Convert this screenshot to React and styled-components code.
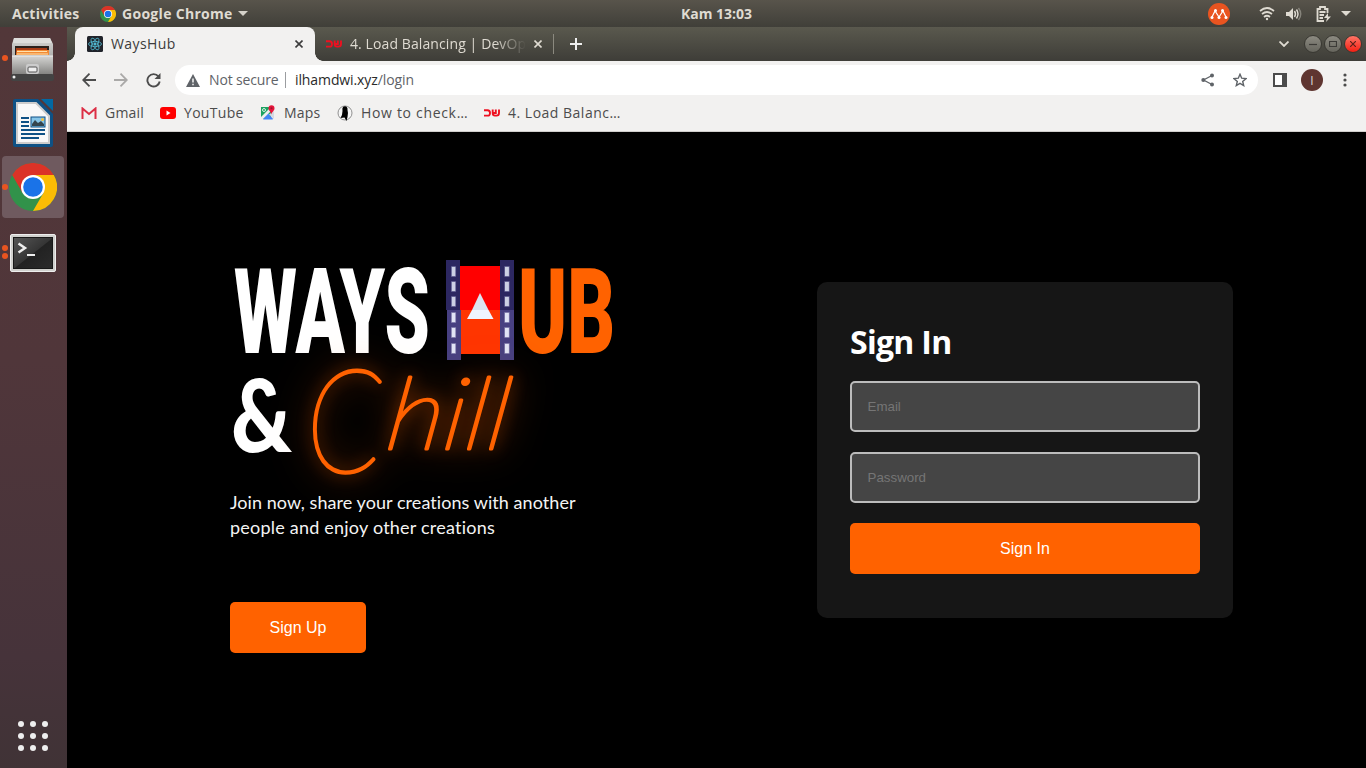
import React from "react";
import styled, { createGlobalStyle } from "styled-components";

const Global = createGlobalStyle`
  * { box-sizing: border-box; }
  body { margin: 0; background: #000; overflow: hidden; }
  button, input { margin: 0; }
  svg { display: block; flex: none; }
`;

const ui = `"Open Sans", "Noto Sans", sans-serif`;

const Desktop = styled.div`
  width: 1366px;
  height: 768px;
  display: flex;
  flex-direction: column;
  font-family: ${ui};
  overflow: hidden;
`;

/* system bar */
const TopBar = styled.header`
  height: 27px;
  flex: none;
  display: grid;
  grid-template-columns: 1fr auto 1fr;
  align-items: center;
  background: linear-gradient(#58544b, #403f39);
  color: #dfdbd2;
  font-size: 14px;
  font-weight: 700;
`;
const TopGroup = styled.div`
  display: flex;
  align-items: center;
  height: 27px;
  justify-content: ${(p) => (p.$end ? "flex-end" : "flex-start")};
  padding: ${(p) => (p.$end ? "0 15px 0 0" : "0 0 0 12px")};
`;
const Label = styled.span`
  display: block;
  white-space: nowrap;
  line-height: 20px;
  letter-spacing: ${(p) => p.$ls || 0}px;
  margin-left: ${(p) => p.$ml || 0}px;
  width: ${(p) => (p.$w ? `${p.$w}px` : "auto")};
`;
const Icon = styled.svg`
  margin-left: ${(p) => p.$ml || 0}px;
  margin-top: ${(p) => p.$mt || 0}px;
`;

const Body = styled.div`
  flex: 1;
  display: flex;
  min-height: 0;
`;

/* dock */
const Dock = styled.nav`
  width: 67px;
  flex: none;
  display: flex;
  flex-direction: column;
  gap: 3px;
  background: linear-gradient(#523739 0%, #50363a 45%, #46333a 85%, #403336 100%);
`;
const DockItem = styled.div`
  height: ${(p) => p.$h || 62}px;
  width: 62px;
  margin-left: 2px;
  border-radius: 4px;
  background: ${(p) => (p.$active ? "#6f5a5f" : "transparent")};
  display: flex;
  align-items: center;
`;
const Dots = styled.div`
  width: 6px;
  display: flex;
  flex-direction: column;
  gap: 2px;
`;
const Dot = styled.i`
  width: 6px;
  height: 6px;
  border-radius: 50%;
  background: #e95420;
`;
const DockIcon = styled.div`
  flex: 1;
  display: flex;
  justify-content: center;
  padding: ${(p) => p.$pt || 0}px 6px 0 0;
`;
const AppsGrid = styled.div`
  margin: auto 0 17px 18px;
  display: grid;
  grid-template-columns: repeat(3, 6px);
  gap: 6px;
`;
const AppDot = styled.i`
  width: 6px;
  height: 6px;
  border-radius: 50%;
  background: #eee;
`;

/* browser */
const Browser = styled.main`
  flex: 1;
  display: flex;
  flex-direction: column;
  min-width: 0;
`;
const TabStrip = styled.div`
  height: 34px;
  flex: none;
  display: flex;
  align-items: center;
  background: linear-gradient(#5a594e, #3e3d38);
  color: #dfdbd2;
  font-size: 14px;
`;
const Tab = styled.div`
  position: relative;
  width: 240px;
  height: 34px;
  margin-left: 8px;
  padding: 0 12px;
  display: flex;
  align-items: center;
  background: #f2f1f0;
  color: #3c3c3c;
  border-radius: 8px 8px 0 0;
  &::before, &::after {
    content: "";
    position: absolute;
    bottom: 0;
    width: 8px;
    height: 8px;
  }
  &::before { left: -8px; background: radial-gradient(circle at 0 0, transparent 7.5px, #f2f1f0 8px); }
  &::after { right: -8px; background: radial-gradient(circle at 100% 0, transparent 7.5px, #f2f1f0 8px); }
`;
const FadeTitle = styled(Label)`
  overflow: hidden;
  mask-image: linear-gradient(90deg, #000 82%, transparent 100%);
`;
const Divider = styled.i`
  width: 1px;
  height: ${(p) => p.$h}px;
  margin-left: ${(p) => p.$ml}px;
  background: ${(p) => p.$c};
`;
const WindowButtons = styled.div`
  margin-left: auto;
  display: flex;
  align-items: center;
  padding-right: 4px;
`;
const WinGroup = styled.div`
  display: flex;
  gap: 2px;
  margin-left: 15px;
`;
const WinBtn = styled.div`
  width: 18px;
  height: 18px;
  border-radius: 50%;
  border: 1px solid #393832;
  background: ${(p) => (p.$close ? "linear-gradient(#ff7566, #f31f13)" : "linear-gradient(#8c8a81, #66655d)")};
  display: grid;
  place-items: center;
`;
const Toolbar = styled.div`
  height: 38px;
  flex: none;
  display: flex;
  align-items: center;
  background: #f2f1f0;
`;
const Address = styled.div`
  width: 1083px;
  height: 30px;
  margin-left: 14px;
  padding: 0 11px 0 10px;
  border-radius: 15px;
  background: #fff;
  color: #5f6368;
  font-size: 14px;
  display: flex;
  align-items: center;
`;
const Host = styled.b`
  font-weight: 400;
  color: #2a2a2a;
`;
const AddressEnd = styled.div`
  margin-left: auto;
  display: flex;
`;
const Avatar = styled.div`
  width: 22px;
  height: 22px;
  margin-left: 14px;
  border-radius: 50%;
  background: #5f3530;
  color: #ddd;
  font-size: 12px;
  display: grid;
  place-items: center;
`;
const Bookmarks = styled.div`
  height: 33px;
  flex: none;
  display: flex;
  align-items: center;
  padding: 0 0 4px 14px;
  background: #f2f1f0;
  border-bottom: 1px solid #d0cecc;
  color: #4c4c4c;
  font-size: 14px;
`;

/* page */
const Page = styled.section`
  flex: 1;
  background: #000;
  display: flex;
  align-items: flex-start;
`;
const Hero = styled.div`
  width: 587px;
  margin-left: 163px;
  padding-top: 118px;
`;
const Tagline = styled.p`
  margin: 0;
  padding-bottom: 1px;
  font-family: Lato, sans-serif;
  font-size: 18px;
  line-height: 25px;
  color: #f4f4f4;
  font-weight: 400;
`;
const Line = styled.span`
  display: block;
  white-space: nowrap;
  letter-spacing: ${(p) => p.$ls}px;
`;
const Button = styled.button`
  width: ${(p) => p.$w};
  height: 51px;
  margin-top: ${(p) => p.$mt}px;
  padding: 0;
  border: 0;
  border-radius: 5px;
  background: #ff6200;
  color: #fff;
  font: 16px "Liberation Sans", sans-serif;
  display: block;
`;
const Card = styled.form`
  width: 416px;
  height: 336px;
  margin-top: 150px;
  padding: 38px 33px 0;
  border-radius: 10px;
  background: #161616;
`;
const Title = styled.h1`
  margin: 0 0 17px;
  color: #fff;
  font: 700 32px/44px ${ui};
  letter-spacing: ${(p) => p.$ls}px;
`;
const Field = styled.input`
  display: block;
  width: 350px;
  height: 51px;
  margin-bottom: 20px;
  padding: 0 15.5px;
  border: 2px solid #bcbcbc;
  border-radius: 5px;
  background: #454545;
  font: 13.333px "Liberation Sans", sans-serif;
  &::placeholder { color: #757575; opacity: 1; }
`;

const Chrome = ({ size, ...rest }) => (
  <Icon width={size} height={size} viewBox="0 0 48 48" {...rest}>
    <circle cx="24" cy="24" r="24" fill="#31924a" />
    <path d="M3.2 12A24 24 0 0 1 44.800 12H24L13.600 30Z" fill="#db3327" />
    <path d="M24 12H44.8A24 24 0 0 1 24 48L34.4 30Z" fill="#fbbc05" />
    <circle cx="24" cy="24" r="12" fill="#fff" />
    <circle cx="24" cy="24" r="9.8" fill="#1a73e8" />
  </Icon>
);

const Files = () => (
  <svg width="44" height="44" viewBox="0 0 44 44">
    <defs>
      <linearGradient id="cab" x2="0" y2="1"><stop stopColor="#d5d5d3" /><stop offset="1" stopColor="#858583" /></linearGradient>
    </defs>
    <path d="M3 1H39L42 7V40H1V7Z" fill="url(#cab)" />
    <path d="M3 1H39L41 6H2Z" fill="#dededc" />
    <path d="M4 9H38V18H4Z" fill="#2b211d" />
    <path d="M5 11H36V18H5Z" fill="#a93c16" />
    <path d="M6 13H38V18H5Z" fill="#f28b35" />
    <path d="M6 14.5H36M6 17H37" stroke="#ffe1ac" />
    <path d="M1 19H42V37H1Z" fill="url(#cab)" />
    <path d="M1 19H42" stroke="#eee" />
    <rect x="15" y="27" width="13" height="10" rx="2" fill="#ccc" />
    <rect x="17" y="30" width="9" height="5" rx="1" fill="#eee" stroke="#555" />
    <rect y="37" width="43" height="7" rx="2" fill="#434343" />
    <circle cx="3" cy="40" r="1.5" fill="#eee" />
  </svg>
);

const Writer = () => (
  <svg width="40" height="48" viewBox="0 0 40 48">
    <path d="M2 0H25L40 15V46Q40 48 38 48H2Q0 48 0 46V2Q0 0 2 0Z" fill="#0e5185" />
    <path d="M28 0H40V12Z" fill="#0369a3" />
    <path d="M4 4H23L36 17V44H4Z" fill="#f8f8f8" stroke="#ccc" strokeWidth="2" />
    <path d="M8 19H16M8 23H16M8 27H16M8 31H32M8 35H32M8 39H26" stroke="#0e5185" strokeWidth="2" />
    <rect x="18" y="18" width="14" height="10" fill="#86c5e8" stroke="#0e5185" />
    <path d="M19 27V25L22 21 25 24 28 22 31 25V27Z" fill="#34454e" />
    <circle cx="29.5" cy="20.5" r="1.5" fill="#f4bf3a" />
  </svg>
);

const Terminal = () => (
  <svg width="46" height="38" viewBox="0 0 46 38">
    <defs><linearGradient id="term" x2="1" y2="1"><stop stopColor="#555" /><stop offset=".5" stopColor="#353535" /><stop offset=".52" stopColor="#222" /><stop offset="1" stopColor="#2b2b2b" /></linearGradient></defs>
    <rect x=".5" y=".5" width="45" height="37" rx="1.5" fill="#d0d0cd" stroke="#eee" />
    <rect x="3" y="3" width="40" height="32" fill="#181818" />
    <rect x="4" y="4" width="38" height="30" fill="url(#term)" />
    <path d="M8.500 9.500 15 14 8.500 18.500" fill="none" stroke="#eee" strokeWidth="2.500" />
    <path d="M17 21H25" stroke="#eee" strokeWidth="2" />
  </svg>
);

/* red two-part course mark shared by the second tab and its bookmark */
const CourseMark = ({ ml }) => (
  <Icon $ml={ml} width="16" height="8" viewBox="0 0 16 8" fill="none" stroke="#ee1020" strokeWidth="1.900">
    <path d="M0 1.200H3.500Q6 1.200 6 4T3.500 6.600H0" />
    <path d="M8.700 .5V4Q8.700 6.600 11 6.600H12.500Q15 6.600 15 4V.5M11.800 .5V4H9" />
  </Icon>
);

const Cross = ({ ml, color }) => (
  <Icon $ml={ml} width="8" height="8" viewBox="0 0 8 8" stroke={color} strokeWidth="1.600"><path d="M.5 .5 7.500 7.500M7.500 .5 .5 7.500" /></Icon>
);

const ReactMark = () => (
  <svg width="16" height="16" viewBox="0 0 16 16" fill="none" stroke="#52bad2" strokeWidth=".8">
    <rect width="16" height="16" rx="1.500" fill="#20232a" stroke="none" />
    <ellipse cx="8" cy="8" rx="6.500" ry="2.600" />
    <ellipse cx="8" cy="8" rx="6.500" ry="2.600" transform="rotate(60 8 8)" />
    <ellipse cx="8" cy="8" rx="6.500" ry="2.600" transform="rotate(120 8 8)" />
    <circle cx="8" cy="8" r="1.200" fill="#52bad2" />
  </svg>
);

const notches = [6, 21, 36, 52, 67, 83];

const Wordmark = styled.svg`
  overflow: visible;
  .caps { font: 900 118px Roboto, sans-serif; }
  .amp { font: 900 101px Lato, sans-serif; }
  .script {
    font-family: Lato, sans-serif;
    font-style: italic;
    font-weight: 100;
    fill: #ff6200;
    stroke: #ff6200;
    stroke-width: 3px;
    stroke-linejoin: round;
    filter: drop-shadow(0 0 8px #ff620070) drop-shadow(0 0 18px #ff620080);
  }
`;

const HeroArt = () => (
  <Wordmark width="390" height="240" viewBox="230 250 390 240">
    <text className="caps" x="234" y="353" fill="#fff" textLength="196" lengthAdjust="spacingAndGlyphs">WAYS</text>
    <text className="caps" x="518" y="353" fill="#ff6200" textLength="97" lengthAdjust="spacingAndGlyphs">UB</text>
    <path d="M460 266H501V310H460Z" fill="#f00" />
    <path d="M460 310H501V354H460Z" fill="#ff3500" />
    <path d="M446 260H460V310H446ZM500 260H514V310H500Z" fill="#2c2761" />
    <path d="M447 310H461V360H447ZM500 310H514V360H500Z" fill="#474081" />
    {notches.map((n, i) => (
      <g key={n} fill={i < 3 ? "#ccd0e4" : "#e1e4f5"} stroke={i < 3 ? "#56528a" : "#7772a5"} strokeWidth=".6">
        <rect x="451.300" y={260.500 + n} width="4.500" height="10" />
        <rect x="504.700" y={260.500 + n} width="4.500" height="10" />
      </g>
    ))}
    <path d="M480 293 488.500 310H472Z" fill="#dce2f1" />
    <path d="M472 310H488.500L493.500 319H467Z" fill="#eff5ff" />
    <text className="amp" x="231" y="452" fill="#fff" textLength="61" lengthAdjust="spacingAndGlyphs">&amp;</text>
    <g className="script">
      <text x="306" y="473" fontSize="144" textLength="76" lengthAdjust="spacingAndGlyphs">C</text>
      <text transform="translate(384 449) skewX(-8)" fontSize="100" textLength="122" lengthAdjust="spacingAndGlyphs">hill</text>
    </g>
  </Wordmark>
);

export default function App() {
  return (
    <Desktop>
      <Global />
      <TopBar>
        <TopGroup>
          <Label $w={68} $ls={0.25}>Activities</Label>
          <Chrome size="16" $ml={20} />
          <Label $ml={6} $w={111} $ls={0.3}>Google Chrome</Label>
          <Icon $ml={5} width="10" height="5" viewBox="0 0 10 5" fill="#d5d2ca"><path d="M0 0H10L5 5Z" /></Icon>
        </TopGroup>
        <Label $ls={0} $ml={67}>Kam 13:03</Label>
        <TopGroup $end>
          <svg width="22" height="22" viewBox="0 0 22 22">
            <circle cx="11" cy="11" r="11" fill="#e95420" />
            <path d="M4 14 7 8 11 14 15 8 18 14" fill="none" stroke="#fff" strokeWidth="1.200" />
            <g fill="#fff"><circle cx="4" cy="14.500" r="1.500" /><circle cx="7.500" cy="7.500" r="1.500" /><circle cx="11" cy="14.500" r="1.500" /><circle cx="14.500" cy="7.500" r="1.500" /><circle cx="18" cy="14.500" r="1.500" /></g>
          </svg>
          <Icon $ml={29} width="16" height="14" viewBox="0 0 16 14" fill="none" stroke="#dfdbd2" strokeWidth="1.700">
            <path d="M1 4Q8-2 15 4" /><path d="M3 7Q8 3 13 7" /><path d="M5 10Q8 7.500 11 10" /><circle cx="8" cy="12" r="1.200" fill="#dfdbd2" stroke="none" />
          </Icon>
          <Icon $ml={11} width="16" height="14" viewBox="0 0 16 14" fill="none" stroke="#dfdbd2" strokeWidth="1.400">
            <path d="M0 5H3L7 1V13L3 9H0Z" fill="#dfdbd2" stroke="none" /><path d="M8.500 4Q10.500 7 8.500 10M10.500 2.500Q13.500 7 10.500 11.500" /><path d="M12.500 1Q17 7 12.500 13" opacity=".4" />
          </Icon>
          <Icon $ml={14} width="16" height="16" viewBox="0 0 16 16" fill="none" stroke="#dfdbd2" strokeWidth="1.800">
            <path d="M8 15H1.500V3H4V1H9V3H11.500V7M3.500 6H9.500M3.500 9H8M3.500 12H7" /><path d="M12 7 8 12H11L10 16 15 10.500H12Z" fill="#dfdbd2" stroke="none" />
          </Icon>
          <Icon $ml={9} width="10" height="5" viewBox="0 0 10 5" fill="#dfdbd2"><path d="M0 0H10L5 5Z" /></Icon>
        </TopGroup>
      </TopBar>
      <Body>
        <Dock>
          <DockItem $h={61}><Dots><Dot /></Dots><DockIcon $pt={3}><Files /></DockIcon></DockItem>
          <DockItem><Dots /><DockIcon $pt={2}><Writer /></DockIcon></DockItem>
          <DockItem $active><Dots><Dot /></Dots><DockIcon><Chrome size="48" /></DockIcon></DockItem>
          <DockItem><Dots><Dot /><Dot /></Dots><DockIcon $pt={2}><Terminal /></DockIcon></DockItem>
          <AppsGrid>{Array.from({ length: 9 }, (_, i) => <AppDot key={i} />)}</AppsGrid>
        </Dock>
        <Browser>
          <TabStrip>
            <Tab>
              <ReactMark />
              <Label $ml={8} $w={175} $ls={0.4}>WaysHub</Label>
              <Cross ml={9} color="#3c3c3c" />
            </Tab>
            <CourseMark ml={11} />
            <FadeTitle $ml={8} $w={176} $ls={0.1}>4. Load Balancing | DevOp</FadeTitle>
            <Cross ml={8} color="#dfdbd2" />
            <Divider $h={20} $ml={11} $c="#8b897f" />
            <Icon $ml={16} width="12" height="12" viewBox="0 0 12 12" stroke="#eee" strokeWidth="2"><path d="M6 0V12M0 6H12" /></Icon>
            <WindowButtons>
              <svg width="10" height="6" viewBox="0 0 10 6" fill="none" stroke="#dfdbd2" strokeWidth="1.800"><path d="M.5 .5 5 5 9.500 .5" /></svg>
              <WinGroup>
                <WinBtn><svg width="8" height="8" viewBox="0 0 8 8" stroke="#3c3b37" strokeWidth="1.200"><path d="M0 4.500H8" /></svg></WinBtn>
                <WinBtn><svg width="8" height="8" viewBox="0 0 8 8" fill="none" stroke="#3c3b37" strokeWidth="1.200"><path d="M.5 1.500H7.500V6.500H.5Z" /></svg></WinBtn>
                <WinBtn $close><svg width="6" height="6" viewBox="0 0 6 6" stroke="#5b211b" strokeWidth="1.200"><path d="M0 0 6 6M6 0 0 6" /></svg></WinBtn>
              </WinGroup>
            </WindowButtons>
          </TabStrip>
          <Toolbar>
            <Icon $ml={15} width="14" height="14" viewBox="0 0 14 14" fill="none" stroke="#4c4c4c" strokeWidth="1.800"><path d="M14 7H1.500M7.500 .7 1.200 7 7.500 13.300" /></Icon>
            <Icon $ml={18} width="14" height="14" viewBox="0 0 14 14" fill="none" stroke="#aaa9a8" strokeWidth="1.800"><path d="M0 7H12.500M6.500 .7 12.800 7 6.500 13.300" /></Icon>
            <Icon $ml={18} width="15" height="15" viewBox="0 0 15 15" fill="none" stroke="#4c4c4c" strokeWidth="1.900"><path d="M12.500 3.500A6.200 6.200 0 1 0 13.700 8.500" /><path d="M14.500 0V6H8.500Z" fill="#4c4c4c" stroke="none" /></Icon>
            <Address>
              <Icon $ml={1} width="14" height="13" viewBox="0 0 14 13"><path d="M7 0 14 13H0Z" fill="#5f6368" /><path d="M7 4.500V8.500M7 9.700V11.200" stroke="#fff" strokeWidth="1.400" /></Icon>
              <Label $ml={9} $w={69} $ls={-0.15}>Not secure</Label>
              <Divider $h={16} $ml={7} $c="#9b9da0" />
              <Label $ml={9} $ls={-0.1}><Host>ilhamdwi.xyz</Host>/login</Label>
              <AddressEnd>
                <Icon width="13" height="14" viewBox="0 0 13 14" fill="none" stroke="#5f6368"><path d="M11 2.500 2.500 7 11 11.500" strokeWidth="1.300" /><g fill="#5f6368" stroke="none"><circle cx="11" cy="2.500" r="2" /><circle cx="2.300" cy="7" r="2" /><circle cx="11" cy="11.500" r="2" /></g></Icon>
                <Icon $ml={19} width="14" height="14" viewBox="0 0 14 14" fill="none" stroke="#5f6368" strokeWidth="1.400"><path d="M7 1.300 8.700 5.200 13 5.600 9.700 8.400 10.700 12.600 7 10.400 3.300 12.600 4.300 8.400 1 5.600 5.300 5.200Z" /></Icon>
              </AddressEnd>
            </Address>
            <Icon $ml={15} width="14" height="14" viewBox="0 0 14 14"><path d="M1 1H13V13H1Z" fill="#fff" stroke="#4c4c4c" strokeWidth="2" /><path d="M9 1H13V13H9Z" fill="#4c4c4c" /></Icon>
            <Avatar>I</Avatar>
            <Icon $ml={20} width="4" height="14" viewBox="0 0 4 14" fill="#4c4c4c"><circle cx="2" cy="2" r="1.600" /><circle cx="2" cy="7" r="1.600" /><circle cx="2" cy="12" r="1.600" /></Icon>
          </Toolbar>
          <Bookmarks>
            <svg width="16" height="12" viewBox="0 0 16 12" fill="none" strokeWidth="2"><path d="M1.500 12V1.500L8 7 14.500 1.500V12" stroke="#dc2f45" /></svg>
            <Label $ml={8} $w={39} $ls={0.2}>Gmail</Label>
            <Icon $ml={16} width="16" height="12" viewBox="0 0 16 12"><rect width="16" height="12" rx="3" fill="#f00" /><path d="M6.500 3.500 10.500 6 6.500 8.500Z" fill="#fff" /></Icon>
            <Label $ml={8} $w={60} $ls={0.3}>YouTube</Label>
            <Icon $ml={16} width="16" height="16" viewBox="0 0 16 16">
              <path d="M1 2H11V14H1Z" fill="#1da261" /><path d="M3 14 8 8 13 14Z" fill="#4285f4" /><path d="M1 12 10 3 12 5 3 14H1Z" fill="#eee" /><path d="M3 14.500 8 9.500 13 14.500Z" fill="#4285f4" /><path d="M9 9.500 14 14V6Z" fill="#d5dae2" />
              <circle cx="4" cy="5" r="1.500" fill="none" stroke="#d8f0e2" /><path d="M11.500 9.500C11 6.500 8.500 6 8.500 3.300A3 3 0 0 1 14.500 3.300C14.500 6 12 6.500 11.500 9.500Z" fill="#e5163b" /><circle cx="11.500" cy="3.200" r="1" fill="#9d1430" />
            </Icon>
            <Label $ml={8} $w={37} $ls={0.2}>Maps</Label>
            <Icon $ml={16} width="16" height="16" viewBox="0 0 16 16"><circle cx="8" cy="8" r="7" fill="#f5f5f5" stroke="#777" strokeWidth=".8" /><path d="M6 2C8 .5 11 1.500 10.500 5Q11.500 8 10.500 12L9.500 16 7.500 12.500 3.500 13Q5.500 10 5.500 6Q5 3 6 2Z" fill="#000" /></Icon>
            <Label $ml={8} $w={107} $ls={0.68}>How to check…</Label>
            <CourseMark ml={16} />
            <Label $ml={8} $w={115} $ls={0.5}>4. Load Balanc…</Label>
          </Bookmarks>
          <Page>
            <Hero>
              <HeroArt />
              <Tagline>
                <Line $ls={0.06}>Join now, share your creations with another</Line>
                <Line $ls={0.22}>people and enjoy other creations</Line>
              </Tagline>
              <Button $w="136px" $mt={61}>Sign Up</Button>
            </Hero>
            <Card>
              <Title $ls={-0.7}>Sign In</Title>
              <Field type="email" placeholder="Email" />
              <Field type="password" placeholder="Password" />
              <Button type="button" $w="350px" $mt={0}>Sign In</Button>
            </Card>
          </Page>
        </Browser>
      </Body>
    </Desktop>
  );
}
